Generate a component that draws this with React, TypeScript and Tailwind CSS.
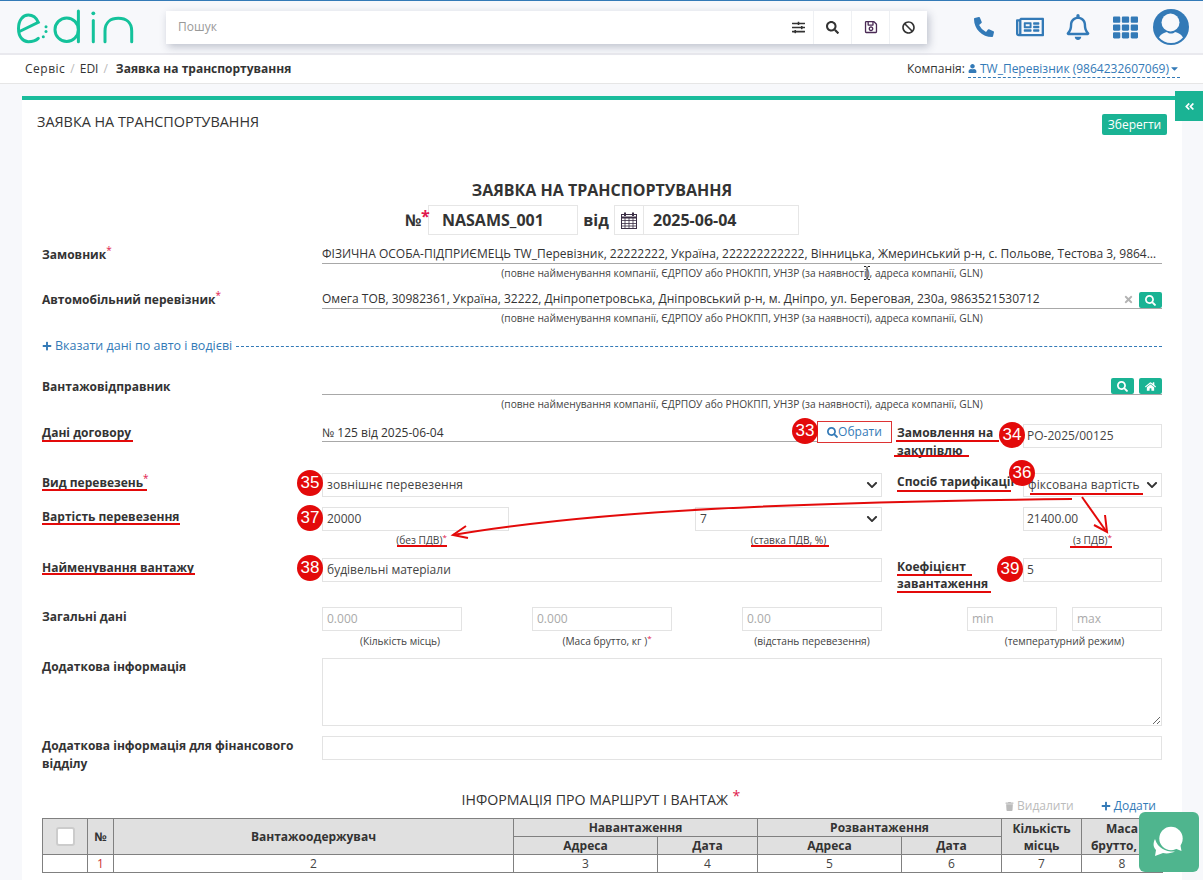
import { ReactNode } from 'react';
import {
  FaBan,
  FaCaretDown,
  FaChevronDown,
  FaHome,
  FaPhoneAlt,
  FaPlus,
  FaRegBell,
  FaRegNewspaper,
  FaRegSave,
  FaSearch,
  FaSlidersH,
  FaTh,
  FaTimes,
  FaTrash,
  FaUser,
  FaAngleDoubleLeft,
} from 'react-icons/fa';

const hint = 'text-[10.2px] leading-[12px] text-[#444] text-center whitespace-nowrap';
const inputBox = 'h-[24px] border border-[#e3e3e3] bg-white px-[3px] flex items-center text-[12px] text-[#444]';

const Logo = () => (
  <svg width="118" height="38" viewBox="0 0 118 38" fill="none" stroke="#14c29b" strokeWidth="3" strokeLinecap="round">
    <g transform="translate(0,3)">
      <path d="M3.5 20.5 L22.3 11.3 C20 6 16 4 12.3 4 C7 4 2.5 9 2.5 17.5 C2.5 26 7 30.7 12.3 30.7 C16 30.7 20 29.5 22.3 27.3" />
      <circle cx="30" cy="15.7" r="1.5" fill="#14c29b" stroke="none" />
      <circle cx="30" cy="20.4" r="1.5" fill="#14c29b" stroke="none" />
      <circle cx="27.3" cy="25.7" r="1.5" fill="#14c29b" stroke="none" />
      <circle cx="50.7" cy="18.7" r="11.7" />
      <path d="M62.4 0 V30.7" />
      <path d="M77.3 9.5 V30.7" />
      <circle cx="77.3" cy="2.3" r="1.9" fill="#14c29b" stroke="none" />
      <path d="M89 30.7 V20 C89 11 95 7.3 102.3 7.3 C110 7.3 115.7 11 115.7 20 V30.7" />
    </g>
  </svg>
);

const Avatar = () => (
  <svg width="36" height="36" viewBox="0 0 36 36">
    <circle cx="18" cy="18" r="18" fill="#337ab7" />
    <circle cx="17.5" cy="13.5" r="9" fill="#f7f8fb" />
    <path d="M6 28.5 C8 24.5 12 23.5 14 23 C16 25 20 25 22 23 C24 23.5 28 24.5 30 28.5 C27 32 23 34 18 34 C13 34 9 32 6 28.5 Z" fill="#f7f8fb" />
  </svg>
);

const Chat = () => (
  <svg width="60" height="60" viewBox="0 0 60 60" fill="white">
    <path d="M16 27 C14 31 14 35 17 38 L16 44 L24 41 C28 42 33 41 36 39.5 C28 40 19 37 16 27 Z" />
    <circle cx="32" cy="26.5" r="11.7" />
    <path d="M35 36 L42.5 39 L41 31 Z" />
  </svg>
);

const CalendarIcon = () => (
  <svg width="16" height="17" viewBox="0 0 16 17" fill="none" stroke="#3b2f45" strokeWidth="1">
    <rect x="0.5" y="2.5" width="15" height="14" />
    <path d="M0.5 5.5H15.5" strokeWidth="2" />
    <path d="M0.5 8.5H15.5M0.5 11.5H15.5M0.5 14H15.5M4 6V16M8 6V16M12 6V16" strokeWidth="0.8" />
    <path d="M4 0.5V4M12 0.5V4" strokeWidth="2" />
  </svg>
);

const Req = () => <sup className="text-[#e0184d] text-[10px] font-normal">*</sup>;
const HintReq = () => <sup className="text-[#e0184d] text-[8px] font-normal">*</sup>;

const Row = ({ label, className, children }: { label?: ReactNode; className: string; children: ReactNode }) => (
  <div className={`flex ${className}`}>
    <div className="w-[280px] shrink-0 text-[12px] font-bold leading-[18px] text-[#333]">{label}</div>
    <div className="flex-1 min-w-0">{children}</div>
  </div>
);

const LineField = ({ value, note, actions }: { value?: string; note: string; actions?: ReactNode }) => (
  <>
    <div className="flex items-end h-[21px] border-b border-[#a8a8a8]">
      <div className="flex-1 whitespace-nowrap text-[12px] leading-[18px] text-[#333]">{value}</div>
      {actions}
    </div>
    <div className={`${hint} mt-[3px]`}>{note}</div>
  </>
);

const note = '(повне найменування компанії, ЄДРПОУ або РНОКПП, УНЗР (за наявності), адреса компанії, GLN)';

const Select = ({ value, className }: { value: string; className: string }) => (
  <div className={`${inputBox} justify-between ${className}`}>
    <span className="tracking-[0.1px] pl-[1px]">{value}</span>
    <FaChevronDown className="text-[12px] text-[#333]" />
  </div>
);

const GreenIcon = ({ children }: { children: ReactNode }) => (
  <span className="ml-[5px] w-[23px] h-[16px] rounded-[2px] bg-[#1ab394] text-white text-[11px] flex items-center justify-center">{children}</span>
);

const Muted = ({ w, ph }: { w: string; ph: string }) => (
  <div className={`${inputBox} text-[#aaa] ${w}`}>{ph}</div>
);

const Badge = ({ n, className }: { n: number; className: string }) => (
  <div className={`absolute w-[26px] h-[26px] rounded-full bg-[#e30a0a] text-white text-[17px] font-['Liberation_Sans',sans-serif] flex items-center justify-center ${className}`}>{n}</div>
);

const th = 'border border-[#808080] bg-[#e0e0e0] text-[12px] font-bold text-[#333] leading-[17px] p-0 text-center';
const td = 'border border-[#808080] text-[12px] text-[#444] leading-[17px] p-0 text-center';

const ToolBtn = ({ children, w }: { children: ReactNode; w: string }) => (
  <div className={`h-full bg-white flex items-center justify-center text-[#333] ${w}`}>{children}</div>
);

export default function App() {
  return (
    <div className="relative w-[1203px] h-[880px] overflow-hidden bg-[#f7f8fb] font-['Open_Sans',sans-serif] text-[#333]">
      {/* header */}
      <header className="h-[55px] border-t border-[#337ab7] border-b-2 border-b-[#e9e9ee] flex items-center pl-[16px]">
        <Logo />
        <div className="ml-[32px] w-[761px] h-[33px] flex gap-[1px] bg-[#eef0f3] shadow-[2px_3px_8px_rgba(60,70,100,0.3)]">
          <div className="flex-1 bg-white flex items-center justify-between pl-[12px] pr-[8px]">
            <span className="text-[12px] text-[#999]">Пошук</span>
            <FaSlidersH className="text-[13px] text-[#333]" />
          </div>
          <ToolBtn w="w-[37px]"><FaSearch className="text-[13px]" /></ToolBtn>
          <ToolBtn w="w-[37px]"><FaRegSave className="text-[14px] text-[#4a2a55]" /></ToolBtn>
          <ToolBtn w="w-[37px]"><FaBan className="text-[13px]" /></ToolBtn>
        </div>
        <div className="ml-[47px] flex items-center text-[#337ab7]">
          <FaPhoneAlt className="text-[20px]" />
          <FaRegNewspaper className="text-[28px] ml-[22px]" />
          <FaRegBell className="text-[26px] ml-[21px]" />
          <FaTh className="text-[25px] ml-[22px]" />
          <span className="ml-[15px]"><Avatar /></span>
        </div>
      </header>

      {/* breadcrumbs */}
      <div className="h-[29px] bg-white border-b border-[#e6e6e6] flex items-center justify-between pl-[25px] pr-[23px] text-[12px]">
        <div className="flex items-center">
          <span className="tracking-[0.5px]">Сервіс</span><span className="text-[#bbb] mx-[5px]">/</span>
          <span>EDI</span><span className="text-[#bbb] mx-[5px]">/</span>
          <span className="font-bold ml-[3px]">Заявка на транспортування</span>
        </div>
        <div className="flex items-center">
          <span>Компанія:&nbsp;</span>
          <span className="flex items-center text-[#337ab7] border-b border-dashed border-[#337ab7] leading-[17px]">
            <FaUser className="text-[9px] mr-[3px]" />TW_Перевізник (9864232607069)
            <FaCaretDown className="text-[11px]" />
          </span>
        </div>
      </div>

      {/* form card */}
      <main className="ml-[22px] mt-[12px] w-[1160px] h-[790px] bg-white border-t-4 border-[#1abc9c] px-[20px]">
        <div className="flex justify-between items-start -mx-[5px] pt-[14px] h-[81px]">
          <h1 className="text-[14.4px] leading-[16px] text-[#333]">ЗАЯВКА НА ТРАНСПОРТУВАННЯ</h1>
          <button className="h-[21px] w-[65px] bg-[#1ab394] rounded-[2px] text-white text-[12px]">Зберегти</button>
        </div>

        <h2 className="text-[16px] font-bold leading-[18px] text-center text-[#333]">ЗАЯВКА НА ТРАНСПОРТУВАННЯ</h2>
        <div className="flex items-center h-[30px] mt-[6px] pl-[363px] text-[16px] font-bold">
          <span className="w-[23px] relative">№<span className="absolute left-[16px] -top-[4px] text-[#e0184d] text-[16px]">*</span></span>
          <div className="w-[150px] h-[30px] border border-[#e6e6e6] pl-[13px] flex items-center">NASAMS_001</div>
          <span className="w-[36px] text-center">від</span>
          <div className="w-[30px] h-[30px] border border-[#e6e6e6] flex items-center justify-center font-normal"><CalendarIcon /></div>
          <div className="w-[155px] h-[30px] border border-l-0 border-[#e6e6e6] pl-[9px] flex items-center">2025-06-04</div>
        </div>

        <Row className="mt-[8px] h-[38px]" label={<span className="block pt-[3px]">Замовник<Req /></span>}>
          <LineField value="ФІЗИЧНА ОСОБА-ПІДПРИЄМЕЦЬ TW_Перевізник, 22222222, Україна, 222222222222, Вінницька, Жмеринський р-н, с. Польове, Тестова 3, 9864…" note={note} />
        </Row>
        <Row className="mt-[7px] h-[38px]" label={<span className="block pt-[3px]">Автомобільний перевізник<Req /></span>}>
          <LineField
            value="Омега ТОВ, 30982361, Україна, 32222, Дніпропетровська, Дніпровський р-н, м. Дніпро, ул. Береговая, 230а, 9863521530712"
            note={note}
            actions={
              <>
                <FaTimes className="text-[11px] text-[#b3b3b3] mb-[3px]" />
                <GreenIcon><FaSearch /></GreenIcon>
              </>
            }
          />
        </Row>

        <div className="mt-[12px] h-[16px] flex items-center text-[12.5px] text-[#337ab7]">
          <FaPlus className="text-[10px] mr-[3px]" />
          <span>Вказати дані по авто і водієві</span>
          <div className="flex-1 ml-[4px] border-t border-dashed border-[#337ab7]" />
        </div>

        <Row className="mt-[20px] h-[38px]" label={<span className="block pt-[4px]">Вантажовідправник</span>}>
          <LineField note={note} actions={<><GreenIcon><FaSearch /></GreenIcon><GreenIcon><FaHome /></GreenIcon></>} />
        </Row>

        <Row className="mt-[9px] h-[52px]" label={<span className="block pt-[3px]">Дані договору</span>}>
          <div className="flex items-start">
            <div className="w-[495px] h-[21px] border-b border-[#a8a8a8] text-[12px] leading-[24px] whitespace-nowrap">№ 125 від 2025-06-04</div>
            <div className="w-[75px] h-[22px] border border-[#d33] flex items-center justify-center text-[12px] text-[#337ab7]"><FaSearch className="text-[11px]" />Обрати</div>
            <div className="w-[131px] pl-[5px] text-[12px] font-bold leading-[18px] mt-[3px]">Замовлення на закупівлю</div>
            <div className={`${inputBox} w-[139px] mt-[3px]`}>PO-2025/00125</div>
          </div>
        </Row>

        <Row className="h-[24px]" label={<span className="block pt-[1px]">Вид перевезень<Req /></span>}>
          <div className="flex">
            <Select value="зовнішнє перевезення" className="w-[560px]" />
            <div className="w-[141px] pl-[15px] text-[12px] font-bold leading-[18px] whitespace-nowrap">Спосіб тарифікації</div>
            <Select value="фіксована вартість" className="w-[139px]" />
          </div>
        </Row>

        <Row className="mt-[10px] h-[41px]" label={<span className="block pt-[1px]">Вартість перевезення</span>}>
          <div className="flex">
            <div className="w-[187px]">
              <div className={`${inputBox} pl-[4px]`}>20000</div>
              <div className={`${hint} mt-[3px] pl-[12px]`}>(без ПДВ)<HintReq /></div>
            </div>
            <div className="w-[187px] ml-[186px]">
              <Select value="7" className="" />
              <div className={`${hint} mt-[3px]`}>(ставка ПДВ, %)</div>
            </div>
            <div className="w-[139px] ml-[141px]">
              <div className={inputBox}>21400.00</div>
              <div className={`${hint} mt-[3px]`}>(з ПДВ)<HintReq /></div>
            </div>
          </div>
        </Row>

        <Row className="mt-[10px] h-[49px]" label={<span className="block pt-[1px]">Найменування вантажу</span>}>
          <div className="flex">
            <div className={`${inputBox} pl-[4px] w-[560px]`}>будівельні матеріали</div>
            <div className="w-[141px] pl-[15px] text-[12px] font-bold leading-[17px]">Коефіцієнт<br />завантаження</div>
            <div className={`${inputBox} w-[139px]`}>5</div>
          </div>
        </Row>

        <Row className="h-[51px]" label={<span className="block pt-[1px]">Загальні дані</span>}>
          <div className="flex">
            <div className="w-[140px]"><Muted w="pl-[4px]" ph="0.000" /><div className={`${hint} mt-[4px] pl-[16px]`}>(Кількість місць)</div></div>
            <div className="w-[140px] ml-[70px]"><Muted w="pl-[4px]" ph="0.000" /><div className={`${hint} mt-[4px] pl-[10px]`}>(Маса брутто, кг )<HintReq /></div></div>
            <div className="w-[140px] ml-[70px]"><Muted w="pl-[4px]" ph="0.00" /><div className={`${hint} mt-[4px]`}>(відстань перевезення)</div></div>
            <div className="w-[195px] ml-[85px]">
              <div className="flex justify-between">
                <Muted w="w-[90px] pl-[4px]" ph="min" />
                <Muted w="w-[90px] pl-[4px]" ph="max" />
              </div>
              <div className={`${hint} mt-[4px]`}>(температурний режим)</div>
            </div>
          </div>
        </Row>

        <Row className="h-[78px]" label="Додаткова інформація">
          <textarea readOnly className="block w-full h-[68px] border border-[#e3e3e3]" />
        </Row>

        <Row className="h-[48px]" label={<span className="block pr-[10px] mt-[1px]">Додаткова інформація для фінансового відділу</span>}>
          <div className="h-[24px] border border-[#e3e3e3]" />
        </Row>

        <div className="flex h-[34px] relative">
          <div className="flex-1 text-center text-[14.2px] leading-[16px] pt-[8px] pr-[2px]">ІНФОРМАЦІЯ ПРО МАРШРУТ І ВАНТАЖ <span className="text-[#e0184d] relative -top-[4px] ml-[1px]">*</span></div>
          <div className="absolute right-[6px] top-[14px] flex items-center text-[12px] leading-[16px]">
            <span className="flex items-center text-[#bbb]"><FaTrash className="text-[9px] mr-[3px]" />Видалити</span>
            <span className="flex items-center text-[#337ab7] ml-[27px]"><FaPlus className="text-[10px] mr-[3px]" />Додати</span>
          </div>
        </div>

        <table className="w-[1120px] table-fixed border-collapse">
          <colgroup>
            <col className="w-[45px]" /><col className="w-[26px]" /><col className="w-[400px]" /><col className="w-[144px]" /><col className="w-[100px]" /><col className="w-[144px]" /><col className="w-[100px]" /><col className="w-[80px]" /><col className="w-[81px]" />
          </colgroup>
          <thead>
            <tr className="h-[18px]">
              <th rowSpan={2} className={th}><div className="mx-auto w-[19px] h-[19px] bg-white border-2 border-[#ccc] rounded-[3px]" /></th>
              <th rowSpan={2} className={th}>№</th>
              <th rowSpan={2} className={th}>Вантажоодержувач</th>
              <th colSpan={2} className={th}>Навантаження</th>
              <th colSpan={2} className={th}>Розвантаження</th>
              <th rowSpan={2} className={th}>Кількість<br />місць</th>
              <th rowSpan={2} className={th}>Маса<br />брутто, кг</th>
            </tr>
            <tr className="h-[18px]">
              <th className={th}>Адреса</th><th className={th}>Дата</th><th className={th}>Адреса</th><th className={th}>Дата</th>
            </tr>
          </thead>
          <tbody>
            <tr className="h-[18px]">
              <td className={td} /><td className={`${td} text-[#c33]`}>1</td>
              {[2, 3, 4, 5, 6, 7, 8].map((n) => <td key={n} className={td}>{n}</td>)}
            </tr>
          </tbody>
        </table>
      </main>

      {/* side tab + chat */}
      <div className="absolute left-[1175px] top-[91px] w-[28px] h-[30px] bg-[#1ab394] flex items-center justify-center text-white text-[11px]"><FaAngleDoubleLeft /></div>
      <div className="absolute left-[1139px] top-[812px] w-[60px] h-[60px] rounded-[6px] bg-[#4fb58e]"><Chat /></div>

      {/* red annotations */}
      <svg className="absolute left-0 top-0 pointer-events-none" width="1203" height="880" fill="none" stroke="#e30a0a" strokeWidth="2">
        <path d="M42 441H133M896 441H999M894 456H969M42 490H147M897 491H1011M1030 494H1143M42 524H180M397 546H447M751 546H829M1070 547H1112M42 574H195M897 575H972M897 592H991" />
        <path d="M1072 499 C 800 502 600 510 453 535" />
        <path d="M466 526 L453 535 L468 538" />
        <path d="M1082 497 L1106 531" />
        <path d="M1094 525 L1107 532 L1105 515" />
      </svg>
      {/* text cursor */}
      <svg className="absolute left-[863px] top-[266px]" width="8" height="14" viewBox="0 0 8 14" fill="none" stroke="#222" strokeWidth="1">
        <path d="M1 0.5H3L4 1.5L5 0.5H7M4 1.5V12.5M1 13.5H3L4 12.5L5 13.5H7" />
      </svg>
      <Badge n={33} className="left-[792px] top-[418px]" />
      <Badge n={34} className="left-[999px] top-[422px]" />
      <Badge n={35} className="left-[297px] top-[470px]" />
      <Badge n={36} className="left-[1009px] top-[460px]" />
      <Badge n={37} className="left-[297px] top-[505px]" />
      <Badge n={38} className="left-[297px] top-[555px]" />
      <Badge n={39} className="left-[997px] top-[556px]" />
    </div>
  );
}
